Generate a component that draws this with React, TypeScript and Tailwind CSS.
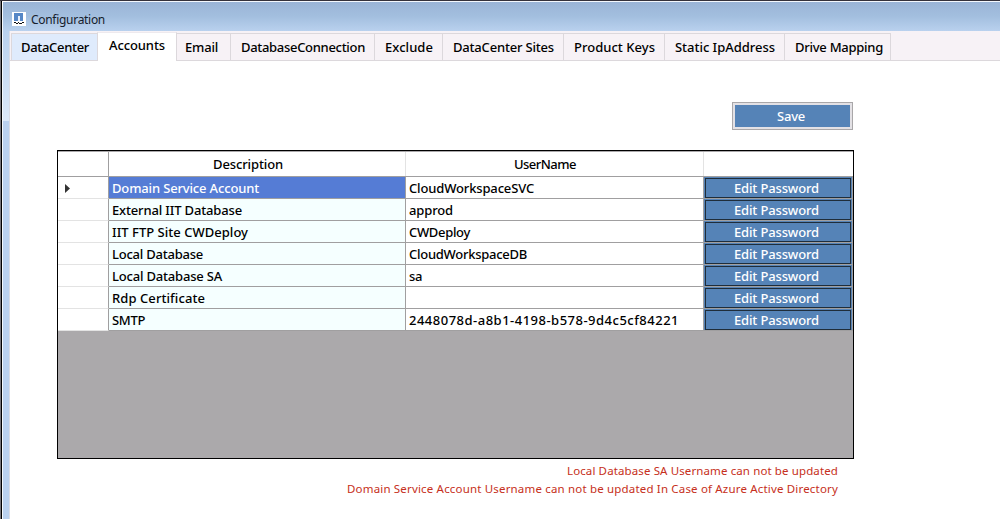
import { useLayoutEffect, useRef, useState } from "react";

const UI = "font-['Noto_Sans',sans-serif]";

/** One line of text whose tracking is tuned so that it fills the given width. */
function Fit({ text, width, className = "" }: { text: string; width: number; className?: string }) {
  const ref = useRef<HTMLSpanElement>(null);
  const [spacing, setSpacing] = useState(0);
  useLayoutEffect(() => {
    if (ref.current) {
      const natural = ref.current.getBoundingClientRect().width;
      setSpacing((width - natural) / text.length);
    }
  }, [text, width]);
  return (
    <span ref={ref} className={`inline-block whitespace-pre ${className}`} style={{ letterSpacing: `${spacing}px` }}>
      {text}
    </span>
  );
}

const tabs = [
  { label: "Email", box: "w-[54px] pl-2", text: 33 },
  { label: "DatabaseConnection", box: "w-36 pl-2.5", text: 124 },
  { label: "Exclude", box: "w-[68px] pl-2.5", text: 48 },
  { label: "DataCenter Sites", box: "w-[121px] pl-2.5", text: 101 },
  { label: "Product Keys", box: "w-[101px] pl-2.5", text: 81 },
  { label: "Static IpAddress", box: "w-[120px] pl-2.5", text: 100 },
  { label: "Drive Mapping", box: "w-[106px] pl-2.5", text: 88 },
];

const rows = [
  { description: "Domain Service Account", dw: 147, user: "CloudWorkspaceSVC", uw: 125 },
  { description: "External IIT Database", dw: 130, user: "approd", uw: 44 },
  { description: "IIT FTP Site CWDeploy", dw: 136, user: "CWDeploy", uw: 61 },
  { description: "Local Database", dw: 91, user: "CloudWorkspaceDB", uw: 118 },
  { description: "Local Database SA", dw: 110, user: "sa", uw: 13 },
  { description: "Rdp Certificate", dw: 93, user: "", uw: 0 },
  { description: "SMTP", dw: 33, user: "2448078d-a8b1-4198-b578-9d4c5cf84221", uw: 270 },
];

function TitleBar() {
  return (
    <div className="flex h-[29px] items-start bg-linear-to-b from-[#9ab4d6] via-[#a3bfdf] to-[#b9d1ee] pl-[9px]">
      <svg className="mt-[10px] h-[14px] w-[14px]" viewBox="0 0 14 14" shapeRendering="crispEdges">
        <rect width="14" height="14" rx="1" fill="#fff" />
        <path d="M2 1h9v8H8V4H6v5H2z" fill="#5687c6" />
        <path d="M6 4h2v5H6z" fill="#e8effa" />
        <path d="M2 10h2v1H2zM4 11h2v1H4zM6 10h1v1H6zM7 11h2v1H7zM10 10h2v1h-2zM9 11h1v1H9z" fill="#111" />
      </svg>
      <Fit text="Configuration" width={74} className="ml-[5px] mt-[10px] text-[12px] font-normal leading-4 text-[#16202c]" />
    </div>
  );
}

function TabStrip() {
  return (
    <div className="flex h-[30px] items-end border-b border-[#dcd8dc] bg-[#f7f2f6]">
      <div className="ml-px flex h-[27px] w-[86px] border-l border-t border-[#dcd8dc] bg-[#dfebfc] pl-[9px]">
        <Fit text="DataCenter" width={68} className="mt-[3px]" />
      </div>
      <div className="-mb-px flex h-[29px] w-20 border-x border-t border-x-[#dcd8dc] border-t-[#eeeaee] bg-white pl-[11px]">
        <Fit text="Accounts" width={56} className="mt-[2px]" />
      </div>
      {tabs.map((tab) => (
        <div key={tab.label} className={`flex h-[27px] border-r border-t border-[#dcd8dc] ${tab.box}`}>
          <Fit text={tab.label} width={tab.text} className="mt-[3px]" />
        </div>
      ))}
    </div>
  );
}

function AccountsGrid() {
  return (
    <div className="ml-[47px] mt-[20px] flex h-[309px] w-[797px] flex-col border border-black bg-[#aba9ab]">
      <div className="mt-px flex h-[25px] border-b border-[#a09fa0] bg-white leading-6">
        <div className="w-[51px] border-r border-[#a09fa0]" />
        <div className="w-[297px] border-r border-[#e3e3e3] pl-[104px]">
          <Fit text="Description" width={70} />
        </div>
        <div className="w-[298px] border-r border-[#e3e3e3] pl-[108px]">
          <Fit text="UserName" width={62} />
        </div>
      </div>
      {rows.map((row, i) => (
        <div key={row.description} className="flex h-[22px] leading-[23px]">
          <div className="flex w-[51px] items-center border-b border-r border-b-[#e3e3e3] border-r-[#a09fa0] bg-white pl-[7px] pt-px">
            {i === 0 && (
              <svg className="h-[9px] w-[5px]" viewBox="0 0 5 9">
                <path d="M0 0l5 4.5L0 9z" fill="#333" />
              </svg>
            )}
          </div>
          <div
            className={`w-[297px] border-b border-r border-[#a09fa0] pl-[3px] ${i === 0 ? "bg-[#557cd5] text-white" : "bg-[#f5ffff]"}`}
          >
            <Fit text={row.description} width={row.dw} />
          </div>
          <div className="w-[298px] border-b border-r border-[#a09fa0] bg-white pl-[3px]">
            {row.user && <Fit text={row.user} width={row.uw} />}
          </div>
          <div className="flex flex-1 border-b border-r border-[#a09fa0] bg-[#5583b7] px-px">
            <button className="mt-px flex h-5 w-full justify-center border border-[#1f2d3a] pr-[3px] leading-[19px] text-white">
              <Fit text="Edit Password" width={85} />
            </button>
          </div>
        </div>
      ))}
    </div>
  );
}

export default function App() {
  return (
    <div className={`flex h-[519px] w-[1000px] flex-col overflow-hidden bg-white text-[13px] font-medium leading-5 text-black ${UI}`}>
      <div className="h-px shrink-0 bg-[#35313a]" />
      <div className="flex min-h-0 flex-1">
        <div className="w-px bg-[#77757a]" />
        <div className="w-px bg-black" />
        <div className="flex min-w-0 flex-1 flex-col rounded-tl-md border-l border-t border-[#f4f8fd]">
          <TitleBar />
          <div className="flex flex-1">
            <div className="flex w-[6px] flex-col">
              <div className="h-[90px] bg-linear-to-b from-[#b9d1ee] to-[#dce9f9]" />
              <div className="flex-1 bg-[#bad1ef]" />
            </div>
            <div className="flex min-w-0 flex-1 flex-col border-l border-[#d9dce6]">
              <TabStrip />
              <button className="ml-[722px] mt-[41px] flex h-7 w-[121px] border border-[#a9a7a9] bg-[#e3e1e5] p-[2px] text-white">
                <span className="flex h-[22px] w-full justify-center bg-[#5583b7] pr-[3px] leading-[22px]">
                  <Fit text="Save" width={28} />
                </span>
              </button>
              <AccountsGrid />
              <div className="mt-[3px] flex w-[828px] flex-col items-end text-[11.5px] font-normal leading-[18px] text-[#c62f20]">
                <Fit text="Local Database SA Username can not be updated" width={271} />
                <Fit text="Domain Service Account Username can not be updated In Case of Azure Active Directory" width={491} />
              </div>
            </div>
          </div>
        </div>
      </div>
    </div>
  );
}
